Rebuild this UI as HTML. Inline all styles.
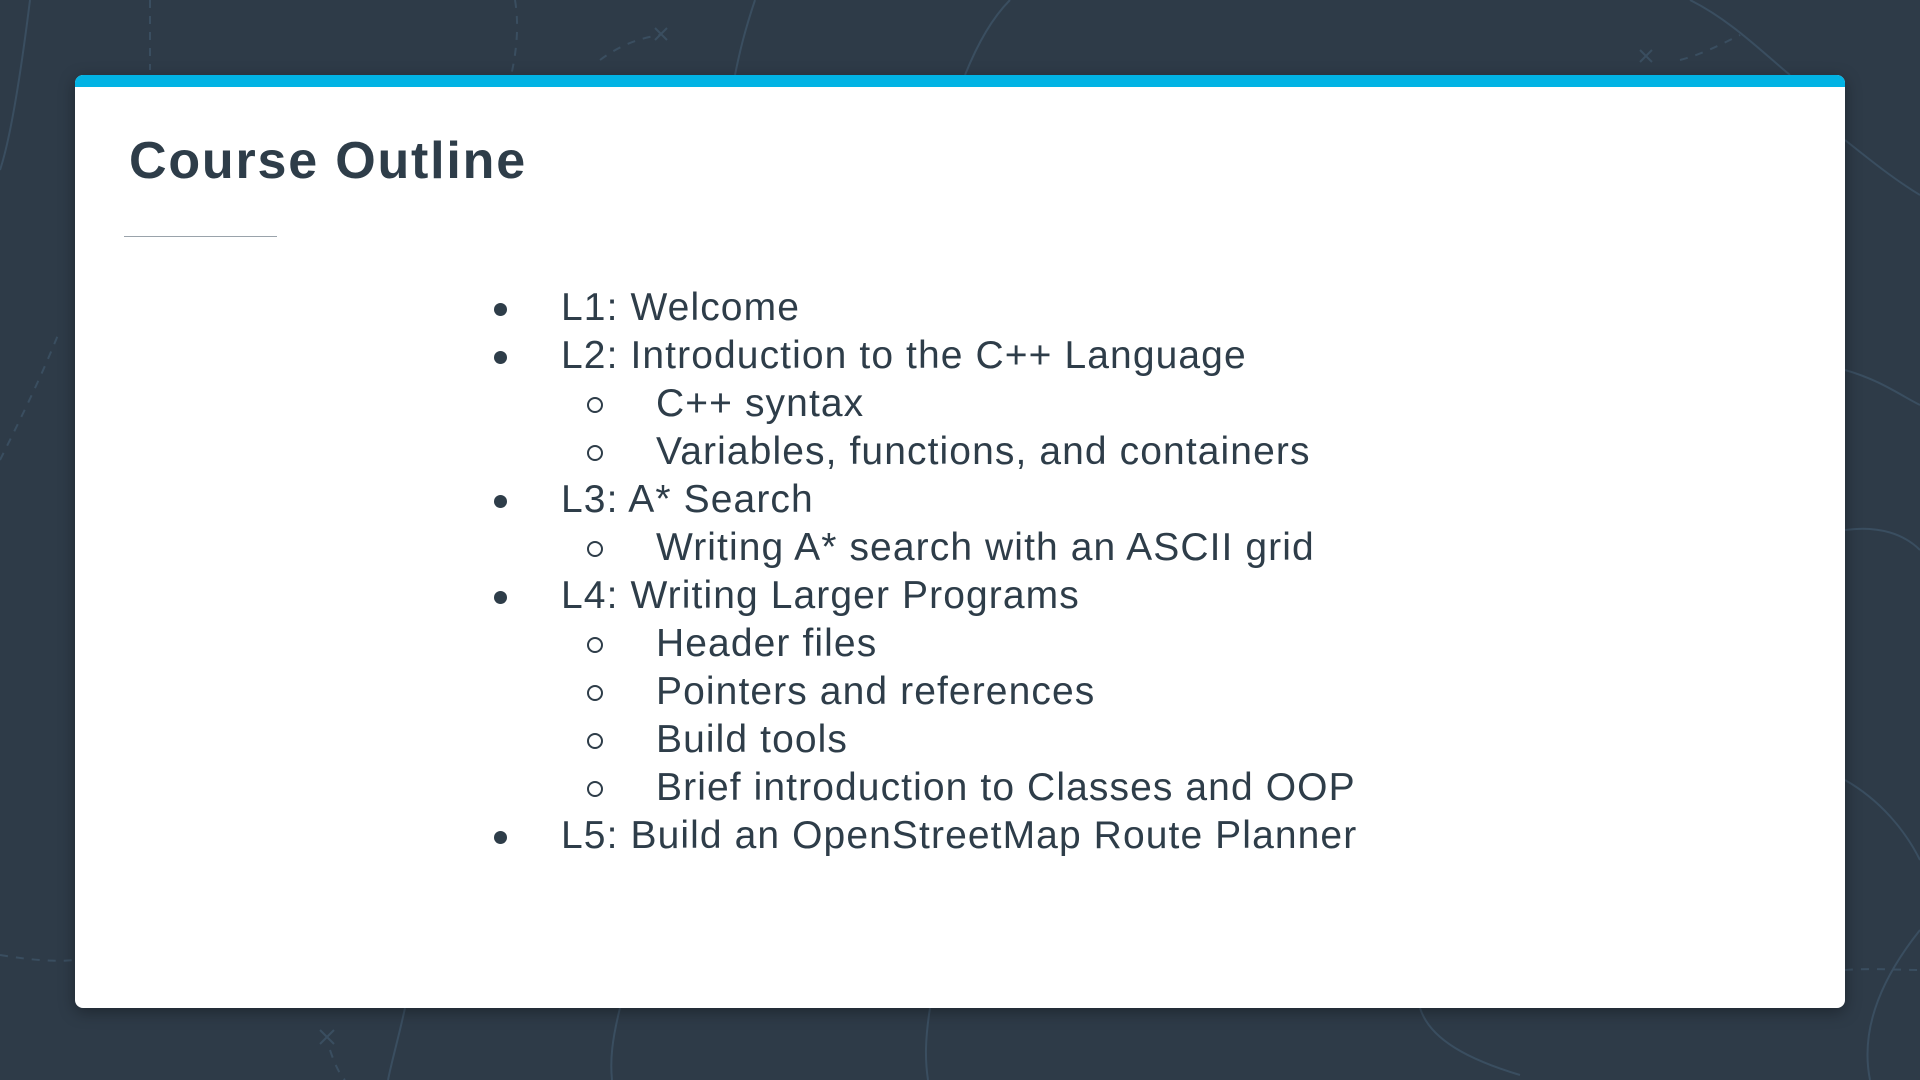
<!DOCTYPE html>
<html><head><meta charset="utf-8"><style>
html,body{margin:0;padding:0;width:1920px;height:1080px;overflow:hidden;background:#2e3b48;font-family:"Liberation Sans",sans-serif;}
.bg{position:absolute;left:0;top:0}
.card{position:absolute;left:75px;top:75px;width:1770px;height:933px;background:#fff;border-radius:8px;overflow:hidden;box-shadow:0 4px 16px rgba(0,0,0,.35)}
.bar{position:absolute;left:0;top:0;width:100%;height:12px;background:#02b3e4}
h1{position:absolute;left:54px;top:56px;margin:0;font-size:52px;font-weight:bold;color:#2e3d49;letter-spacing:1.8px}
.rule{position:absolute;left:49px;top:161px;width:153px;height:1px;background:#9aa3ab}
ul{position:absolute;left:0;top:209px;margin:0;padding:0;list-style:none;color:#2e3d49;font-size:39px;letter-spacing:1.1px}
li{height:48px;line-height:48px;position:relative;white-space:nowrap}
li.a{padding-left:486px}
li.b{padding-left:581px}
li.a:before{content:"";position:absolute;left:419px;top:19px;width:13px;height:13px;border-radius:50%;background:#2e3d49}
li.b:before{content:"";position:absolute;left:512px;top:17px;border-radius:50%;border:2px solid #2e3d49;box-sizing:border-box;width:16px;height:16px}
</style></head><body>
<svg class="bg" width="1920" height="1080" fill="none" stroke="#3a4e60" stroke-width="2">
<path d="M30 0 C20 80 10 140 0 170"/>
<path d="M150 0 V70" stroke-dasharray="8 8"/>
<path d="M515 0 C520 30 515 60 510 80" stroke-dasharray="8 8"/>
<path d="M600 60 C620 45 640 38 660 35" stroke-dasharray="8 8"/>
<path d="M655 28 l12 12 M667 28 l-12 12"/>
<path d="M755 0 C745 30 740 50 735 75"/>
<path d="M1010 0 C990 20 975 50 965 75"/>
<path d="M1690 0 C1730 20 1760 50 1790 75"/>
<path d="M1640 50 l12 12 M1652 50 l-12 12"/>
<path d="M1680 60 C1700 55 1720 45 1740 35" stroke-dasharray="8 8"/>
<path d="M1845 140 C1870 160 1895 180 1920 195"/>
<path d="M1845 370 C1880 380 1900 395 1920 405"/>
<path d="M1845 530 C1880 525 1905 535 1920 550"/>
<path d="M0 460 C20 420 40 380 60 330" stroke-dasharray="8 8"/>
<path d="M0 955 C30 960 55 962 75 960" stroke-dasharray="8 8"/>
<path d="M320 1030 l14 14 M334 1030 l-14 14"/>
<path d="M330 1050 C335 1065 340 1075 345 1080" stroke-dasharray="8 8"/>
<path d="M405 1008 C398 1040 392 1060 388 1080"/>
<path d="M620 1008 C612 1040 610 1060 612 1080"/>
<path d="M930 1008 C925 1040 925 1060 928 1080"/>
<path d="M1420 1008 C1430 1040 1470 1060 1520 1075"/>
<path d="M1845 780 C1880 800 1905 830 1920 860"/>
<path d="M1920 930 C1880 980 1860 1030 1870 1080"/>
<path d="M1845 970 C1870 968 1900 970 1920 970" stroke-dasharray="8 8"/>
</svg>
<div class="card"><div class="bar"></div>
<h1>Course Outline</h1><div class="rule"></div>
<ul>
<li class="a">L1: Welcome</li>
<li class="a">L2: Introduction to the C++ Language</li>
<li class="b">C++ syntax</li>
<li class="b">Variables, functions, and containers</li>
<li class="a">L3: A* Search</li>
<li class="b">Writing A* search with an ASCII grid</li>
<li class="a">L4: Writing Larger Programs</li>
<li class="b">Header files</li>
<li class="b">Pointers and references</li>
<li class="b">Build tools</li>
<li class="b">Brief introduction to Classes and OOP</li>
<li class="a">L5: Build an OpenStreetMap Route Planner</li>
</ul>
</div>
</body></html>
